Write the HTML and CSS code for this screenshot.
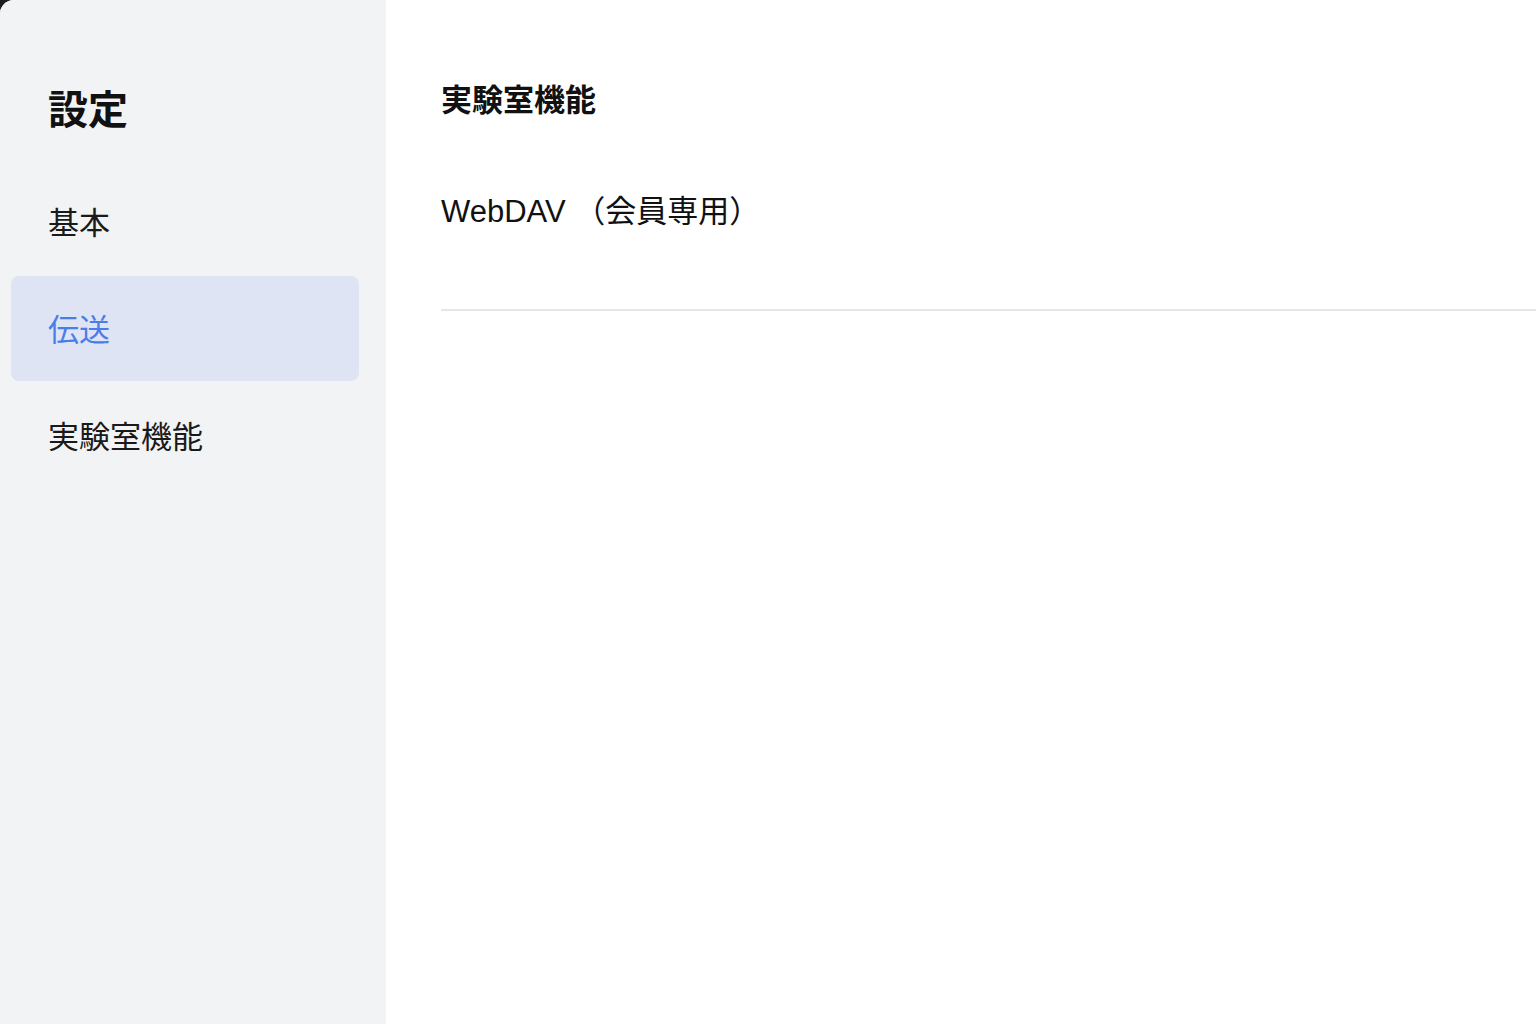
FILE: index.html
```html
<!DOCTYPE html>
<html lang="ja">
<head>
<meta charset="utf-8">
<title>設定</title>
<link rel="stylesheet" href="styles.css">
</head>
<body>
<div class="app">
  <aside class="sidebar">
    <h1 class="sidebar-title">設定</h1>
    <nav class="nav">
      <a class="nav-item">基本</a>
      <a class="nav-item active">伝送</a>
      <a class="nav-item">実験室機能</a>
    </nav>
  </aside>
  <main class="content">
    <h2 class="section-title">実験室機能</h2>
    <div class="setting-row">
      <span class="setting-label">WebDAV （会員専用）</span>
    </div>
  </main>
</div>
</body>
</html>
```
FILE: styles.css
```css
* { box-sizing: border-box; }

html, body {
  margin: 0;
  height: 100%;
}

body {
  background: #1d1d1f;
  font-family: "Liberation Sans", "Noto Sans CJK JP", sans-serif;
  color: #111;
}

.app {
  display: flex;
  height: 100vh;
  background: #fff;
  border-top-left-radius: 14px;
  overflow: hidden;
}

.sidebar {
  width: 386px;
  flex-shrink: 0;
  background: #f2f3f5;
  padding: 80px 27px 0 11px;
}

.sidebar-title {
  margin: 0 0 29px 37px;
  font-size: 40px;
  line-height: 60px;
  font-weight: 700;
  color: #111;
}

.nav {
  display: flex;
  flex-direction: column;
  gap: 2px;
}

.nav-item {
  display: flex;
  align-items: center;
  height: 105px;
  padding-left: 37px;
  padding-bottom: 3px;
  font-size: 31px;
  color: #1a1a1a;
  border-radius: 8px;
}

.nav-item.active {
  background: #dfe4f5;
  color: #4a7de6;
}

.content {
  flex: 1;
  padding: 71px 0 0 55px;
}

.section-title {
  margin: 0;
  font-size: 31px;
  line-height: 60px;
  font-weight: 700;
}

.setting-row {
  display: flex;
  align-items: center;
  height: 180px;
  border-bottom: 2px solid #e6e6e6;
  padding-bottom: 24px;
}

.setting-label {
  font-size: 31px;
  color: #111;
}
```
